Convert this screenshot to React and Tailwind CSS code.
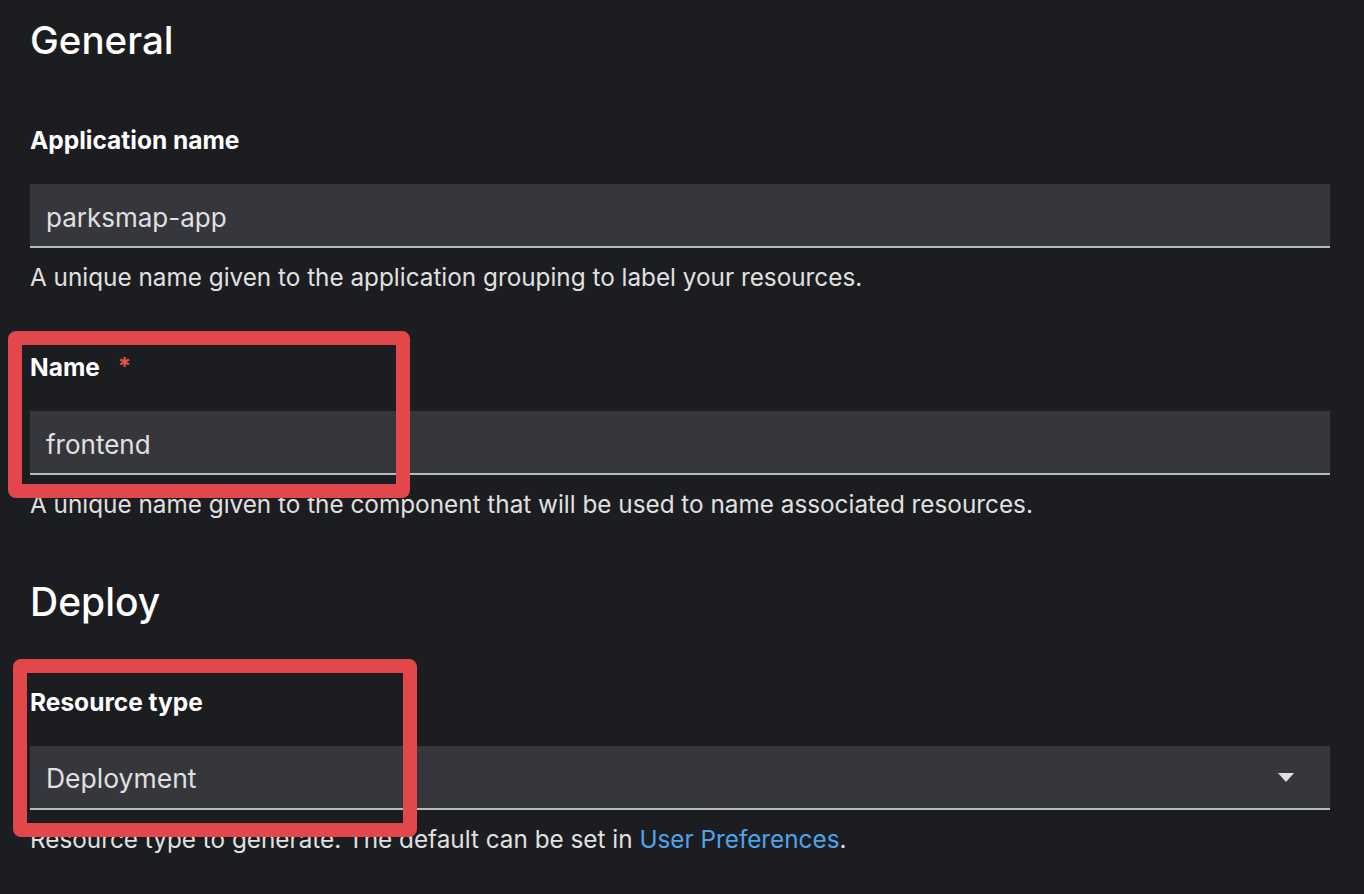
const Field = ({ label, required, children, helper }) => (
  <div>
    <div className="h-8 flex items-center text-[24.5px] font-bold text-white leading-8">
      {label}
      {required && <span className="ml-[18px] mt-1 text-[#e8553f] text-[24px] self-start leading-6">*</span>}
    </div>
    <div className="mt-7">{children}</div>
    <p className="mt-[13px] h-8 leading-8 text-[24.3px] text-[#e0e0e0]">{helper}</p>
  </div>
);

const TextInput = ({ value }) => (
  <div className="h-16 bg-[#36373c] border-b-2 border-[#b8bbbe] flex items-center px-4 pt-1 text-[26px] text-[#e0e0e0]">
    {value}
  </div>
);

const App = () => {
  return (
    <div className="relative min-h-[894px] w-[1364px] bg-[#1b1d21] pl-[30px] pr-[34px] font-['Inter',sans-serif] overflow-hidden">
      <h2 className="pt-4 h-16 leading-[48px] text-[38.5px] font-medium text-white">General</h2>

      <div className="mt-[60px]">
        <Field
          label="Application name"
          helper="A unique name given to the application grouping to label your resources."
        >
          <TextInput value="parksmap-app" />
        </Field>
      </div>

      <div className="mt-[58px]">
        <Field
          label="Name"
          required
          helper="A unique name given to the component that will be used to name associated resources."
        >
          <TextInput value="frontend" />
        </Field>
      </div>

      <h2 className="mt-[58px] h-12 leading-[48px] text-[39px] font-medium text-white">Deploy</h2>

      <div className="mt-[60px]">
        <Field
          label="Resource type"
          helper={
            <>
              Resource type to generate. The default can be set in{" "}
              <span className="text-[#4fa3ec]">User Preferences</span>.
            </>
          }
        >
          <div className="h-16 bg-[#36373c] border-b-2 border-[#b8bbbe] flex items-center justify-between pl-4 pr-9 text-[26.5px] text-[#e0e0e0]">
            <span className="pt-1">Deployment</span>
            <svg width="16" height="9" viewBox="0 0 16 9">
              <path d="M0 0 H16 L8 9 Z" fill="#e0e0e0" />
            </svg>
          </div>
        </Field>
      </div>

      {/* annotation boxes */}
      <div className="absolute left-[8px] top-[331px] w-[402px] h-[167px] border-[14px] border-[#e2474b] rounded-lg" />
      <div className="absolute left-[13px] top-[659px] w-[404px] h-[178px] border-[14px] border-[#e2474b] rounded-lg" />
    </div>
  );
};

export default App;
